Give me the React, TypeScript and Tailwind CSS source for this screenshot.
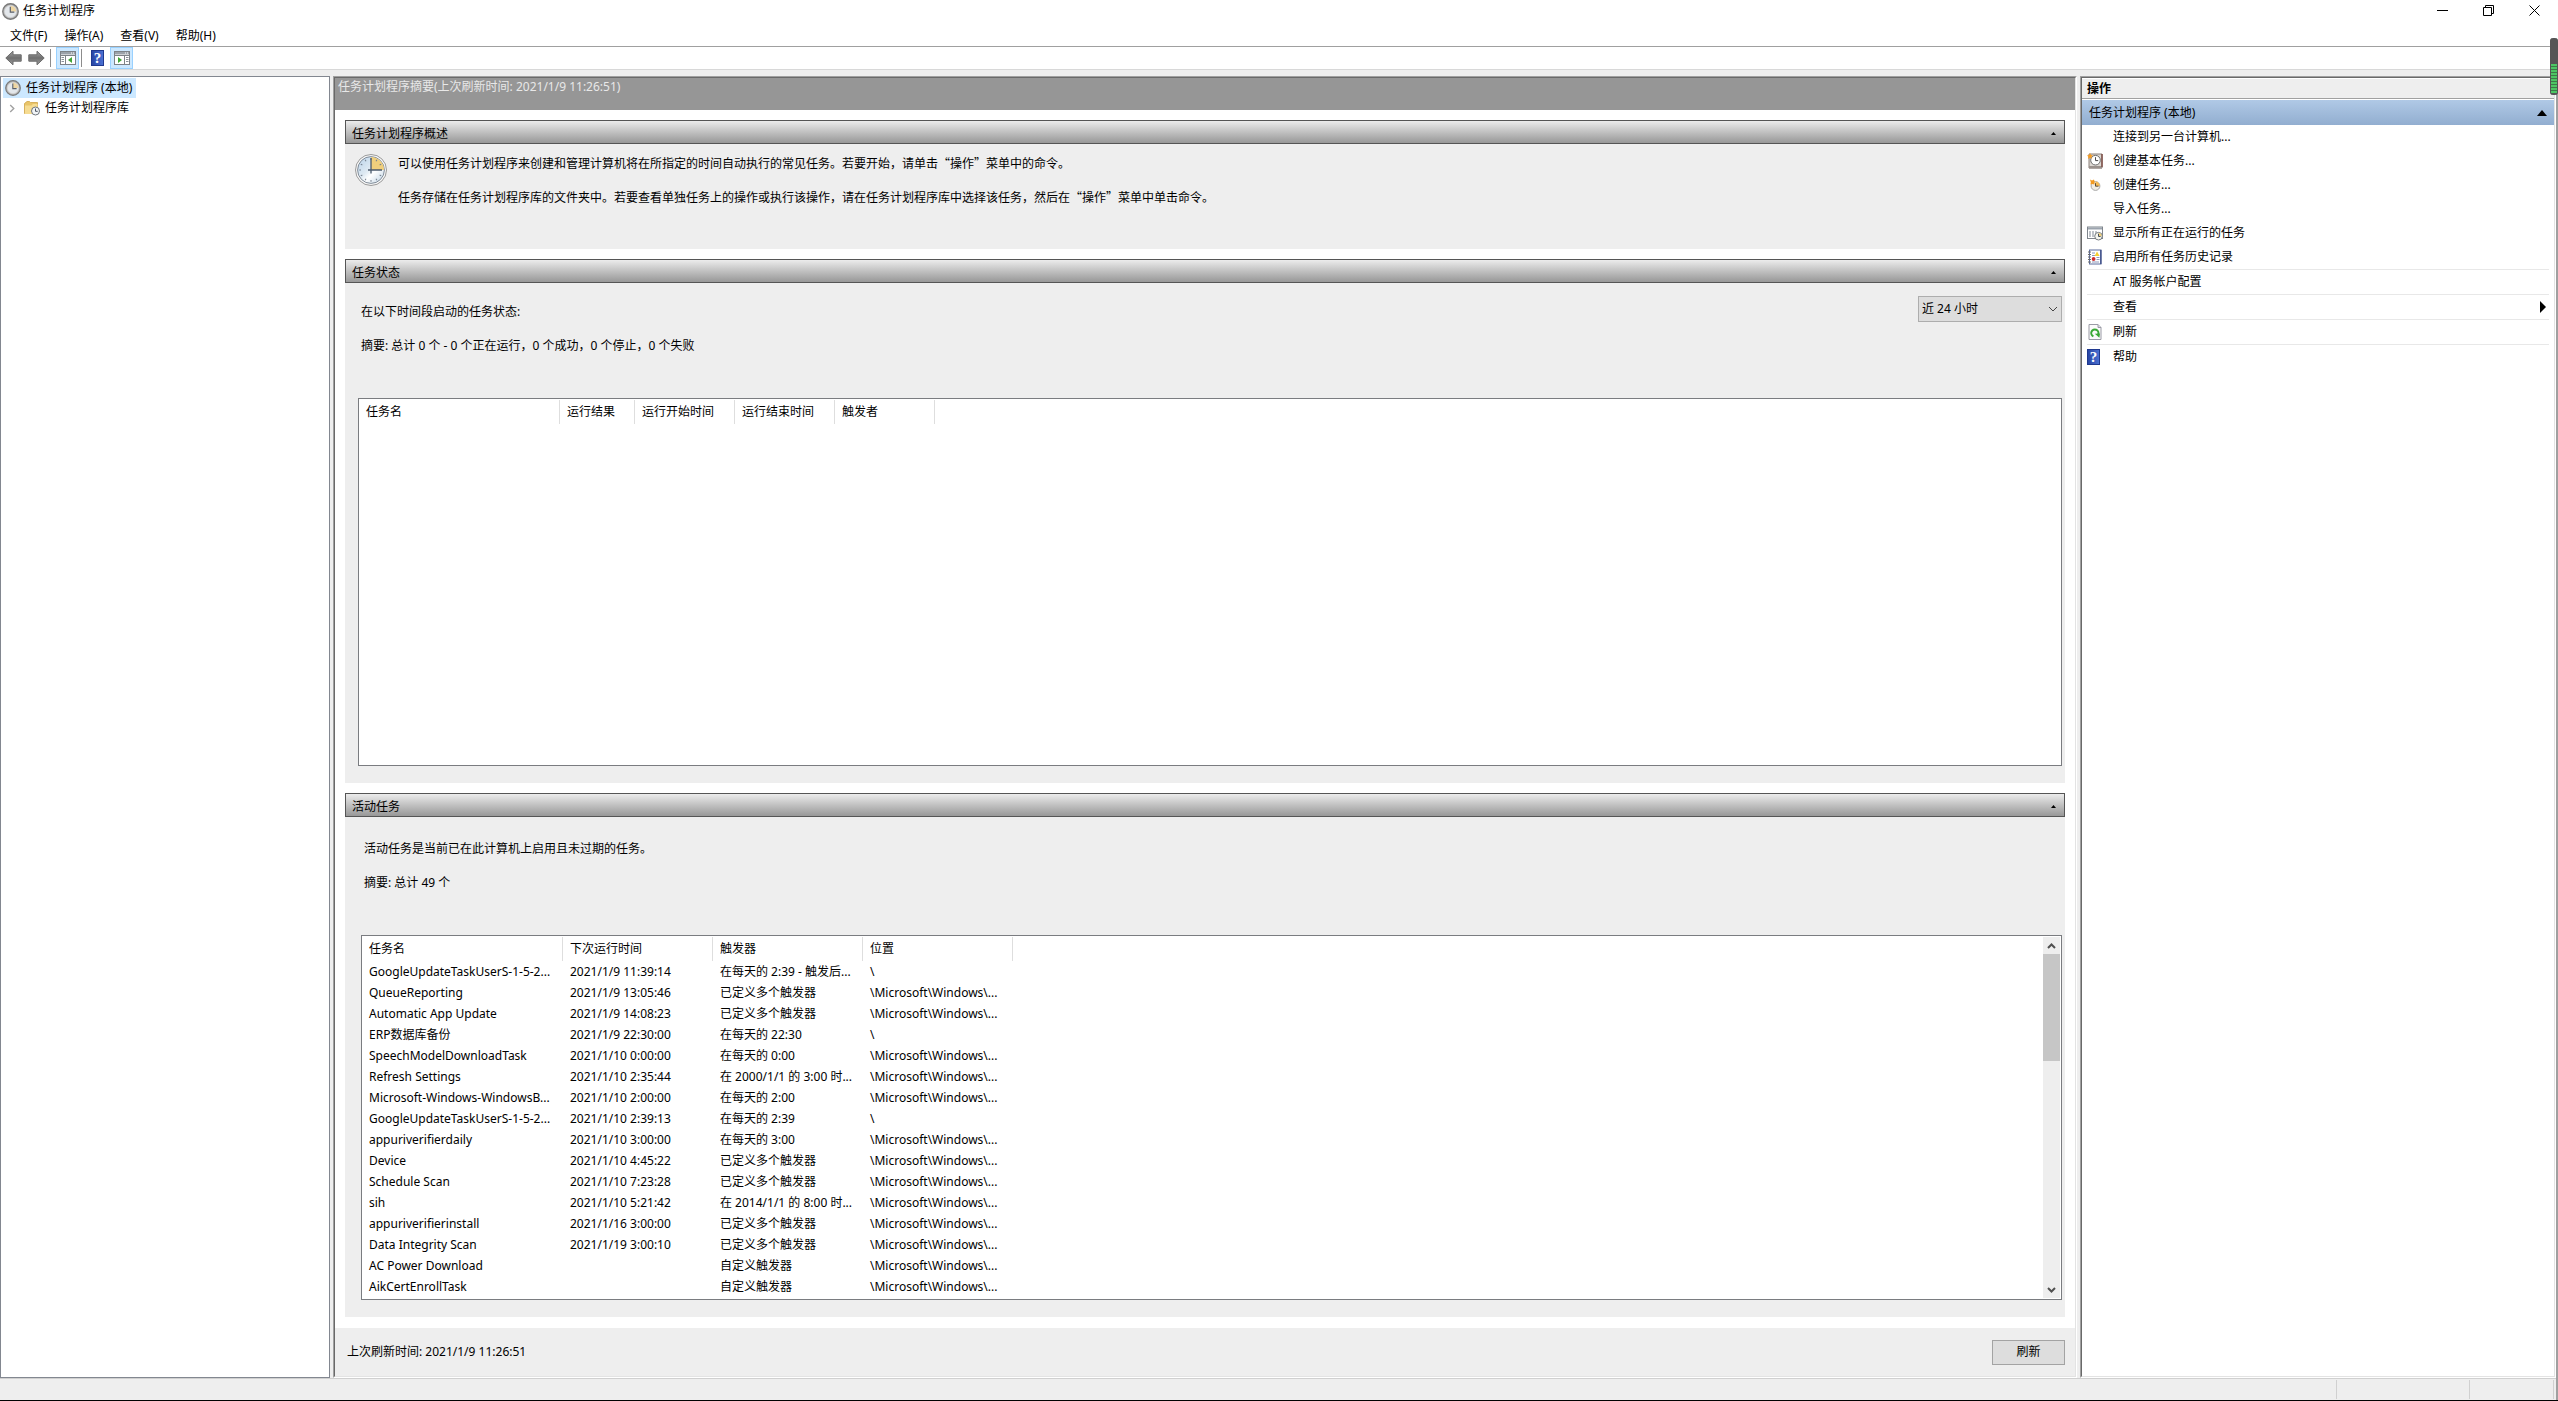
import { useState } from 'react'
import type { ReactNode } from 'react'

type Task = { name: string; next: string; trigger: string; location: string }

const MS = '\\Microsoft\\Windows\\...'

const tasks: Task[] = [
  { name: 'GoogleUpdateTaskUserS-1-5-2...', next: '2021/1/9 11:39:14', trigger: '在每天的 2:39 - 触发后...', location: '\\' },
  { name: 'QueueReporting', next: '2021/1/9 13:05:46', trigger: '已定义多个触发器', location: MS },
  { name: 'Automatic App Update', next: '2021/1/9 14:08:23', trigger: '已定义多个触发器', location: MS },
  { name: 'ERP数据库备份', next: '2021/1/9 22:30:00', trigger: '在每天的 22:30', location: '\\' },
  { name: 'SpeechModelDownloadTask', next: '2021/1/10 0:00:00', trigger: '在每天的 0:00', location: MS },
  { name: 'Refresh Settings', next: '2021/1/10 2:35:44', trigger: '在 2000/1/1 的 3:00 时...', location: MS },
  { name: 'Microsoft-Windows-WindowsB...', next: '2021/1/10 2:00:00', trigger: '在每天的 2:00', location: MS },
  { name: 'GoogleUpdateTaskUserS-1-5-2...', next: '2021/1/10 2:39:13', trigger: '在每天的 2:39', location: '\\' },
  { name: 'appuriverifierdaily', next: '2021/1/10 3:00:00', trigger: '在每天的 3:00', location: MS },
  { name: 'Device', next: '2021/1/10 4:45:22', trigger: '已定义多个触发器', location: MS },
  { name: 'Schedule Scan', next: '2021/1/10 7:23:28', trigger: '已定义多个触发器', location: MS },
  { name: 'sih', next: '2021/1/10 5:21:42', trigger: '在 2014/1/1 的 8:00 时...', location: MS },
  { name: 'appuriverifierinstall', next: '2021/1/16 3:00:00', trigger: '已定义多个触发器', location: MS },
  { name: 'Data Integrity Scan', next: '2021/1/19 3:00:10', trigger: '已定义多个触发器', location: MS },
  { name: 'AC Power Download', next: '', trigger: '自定义触发器', location: MS },
  { name: 'AikCertEnrollTask', next: '', trigger: '自定义触发器', location: MS },
]

function ClockIcon({ className }: { className: string }) {
  return (
    <svg viewBox="0 0 16 16" className={className} aria-hidden="true">
      <circle cx="8" cy="8" r="7.3" fill="#b4b4b4" stroke="#7a7a7a" strokeWidth="1.2" />
      <circle cx="8" cy="8" r="5.6" fill="#e3e7eb" stroke="#d6d6d6" strokeWidth="0.6" />
      <path d="M8 8V2.6A5.4 5.4 0 0 1 13.4 8Z" fill="#eed6a3" />
      <path d="M7.8 3.6V8.6H11.6" fill="none" stroke="#5a5f68" strokeWidth="1.1" />
    </svg>
  )
}

function BigClock() {
  const ticks = [30, 60, 120, 150, 180, 210, 240, 270, 300, 330, 0]
  return (
    <svg viewBox="0 0 32 32" className="mt-px size-8 shrink-0" aria-hidden="true">
      <defs>
        <linearGradient id="face" x1="0" y1="0" x2="1" y2="1">
          <stop offset="0" stopColor="#b9d3ea" />
          <stop offset="0.45" stopColor="#dfeaf3" />
          <stop offset="0.6" stopColor="#ffffff" />
          <stop offset="1" stopColor="#b9cfe2" />
        </linearGradient>
      </defs>
      <circle cx="16" cy="16" r="15.5" fill="#f7f7f7" stroke="#8f8f8f" strokeWidth="0.9" />
      <circle cx="16" cy="16" r="13.4" fill="url(#face)" stroke="#77828e" strokeWidth="0.9" />
      <path d="M16 16V3A13 13 0 0 1 29 16Z" fill="#f0cf7c" />
      {ticks.map((t) => (
        <path key={t} d="M16 4.2V6" stroke="#76818f" strokeWidth="1" transform={`rotate(${t} 16 16)`} />
      ))}
      <path d="M16 4V19.5M13 16H27" stroke="#4b5a6c" strokeWidth="1.3" />
    </svg>
  )
}

function FolderClock() {
  return (
    <svg viewBox="0 0 16 16" className="size-4" aria-hidden="true">
      <path d="M0.5 3.5L3 1.5H5.5L6.5 2.5H13.5V13.5H0.5Z" fill="#e9c468" stroke="#cfa548" strokeWidth="0.8" />
      <path d="M1 5.5H7.5L9 4H13.5V14H1Z" fill="#f6dc92" />
      <circle cx="11.5" cy="11" r="4" fill="#f2f5f8" stroke="#6f757c" strokeWidth="1" />
      <path d="M11.5 8.5V11.3H13.7" fill="none" stroke="#4a5360" strokeWidth="1" />
    </svg>
  )
}

function NavArrow({ flip = false }: { flip?: boolean }) {
  return (
    <svg viewBox="0 0 17 16" className={flip ? 'h-4 w-[17px] -scale-x-100' : 'h-4 w-[17px]'} aria-hidden="true">
      <defs>
        <linearGradient id="nav" x1="0" y1="0" x2="0" y2="1">
          <stop offset="0" stopColor="#a5a5a5" />
          <stop offset="0.5" stopColor="#6f6f6f" />
          <stop offset="1" stopColor="#a0a0a0" />
        </linearGradient>
      </defs>
      <path d="M0.8 8L8 1.2V4.8H16.2V11.2H8V14.8Z" fill="url(#nav)" stroke="#6b6b6b" strokeWidth="1" strokeLinejoin="round" />
    </svg>
  )
}

function PaneIcon({ right = false }: { right?: boolean }) {
  return (
    <svg viewBox="0 0 16 14" className="h-[14px] w-4" aria-hidden="true">
      <rect x="0.5" y="0.5" width="15" height="13" fill="#fff" stroke="#7d8288" />
      <rect x="1" y="1" width="14" height="2.5" fill="#9ba2aa" />
      <path d="M11 2H12M13 2H14" stroke="#fff" />
      <path d="M1 4.5H15" stroke="#7d8288" />
      {right ? (
        <>
          <path d="M10.5 5V13" stroke="#7d8288" />
          <path d="M12 6.5H14.5M12 8.5H14.5M12 10.5H14.5" stroke="#8a9098" />
          <path d="M4 6V12L8 9Z" fill="#3fa535" />
        </>
      ) : (
        <>
          <path d="M5.5 5V13" stroke="#7d8288" />
          <path d="M1.5 6.5H4M1.5 8.5H4M1.5 10.5H4" stroke="#8a9098" />
          <path d="M12 6V12L8 9Z" fill="#3fa535" />
        </>
      )}
    </svg>
  )
}

function HelpIcon() {
  return (
    <span className="flex h-4 w-[13px] items-center justify-center border border-[#20398f] bg-linear-to-r from-[#2946a5] to-[#4a70d2] font-['Liberation_Serif',serif] text-[15px] leading-4 font-bold text-white">
      ?
    </span>
  )
}

function BasicTaskIcon() {
  return (
    <svg viewBox="0 0 16 16" className="size-4" aria-hidden="true">
      <path d="M2 1H15V15H2Z" fill="#dcd7d2" stroke="#8c817b" />
      <path d="M2 13H15V15.5H2Z" fill="#9a918c" />
      <path d="M15 1V14" stroke="#7d4a43" strokeWidth="1.4" />
      <circle cx="8.5" cy="7.2" r="4.8" fill="#fff" stroke="#6d6d6d" />
      <path d="M8.5 4.2V7.6H11.2" fill="none" stroke="#4b4b4b" />
      <path d="M3 0L4 2L6 2.4L4.4 3.8L4.8 6L3 4.8L1 6L1.4 3.8L0 2.4L2.2 2Z" fill="#f49b22" />
    </svg>
  )
}

function NewTaskIcon() {
  return (
    <svg viewBox="0 0 16 16" className="size-4" aria-hidden="true">
      <circle cx="8.5" cy="9" r="4.4" fill="#f1ede4" stroke="#a7a7a7" />
      <path d="M8.5 9V4.6A4.4 4.4 0 0 1 12.9 9Z" fill="#f5bb55" />
      <path d="M3 2.5L5 3.4L7 2.5L7.6 4.5L7.4 7.4L5.4 7L3.4 7.6L3.8 5.2Z" fill="#f39a1f" />
      <path d="M8.5 6.2V9.2H11.5" fill="none" stroke="#5b4a35" />
    </svg>
  )
}

function RunningIcon() {
  return (
    <svg viewBox="0 0 16 16" className="size-4" aria-hidden="true">
      <rect x="0.5" y="2" width="15" height="11.5" fill="#fff" stroke="#7f858c" />
      <path d="M1 3.5H15" stroke="#9ca4ae" strokeWidth="2" />
      <path d="M2 7H4M5 7H7M8 7H10M2 9H4M5 9H7M2 11H4M5 11H7" stroke="#7e8894" />
      <circle cx="11.5" cy="11.2" r="3.8" fill="#f5f5ef" stroke="#747a80" />
      <path d="M11.5 11.2V8A3.2 3.2 0 0 1 14.7 11.2Z" fill="#efd07a" />
      <path d="M11.5 8.8V11.5H13.6" fill="none" stroke="#49525c" />
    </svg>
  )
}

function HistoryIcon() {
  return (
    <svg viewBox="0 0 16 16" className="size-4" aria-hidden="true">
      <rect x="2.5" y="1" width="11.5" height="14" fill="#fff" stroke="#5d6c9c" />
      <path d="M13.8 1V15" stroke="#40508a" strokeWidth="1.4" />
      <path d="M1 3H4M1 5.5H4M1 8H4M1 10.5H4M1 13H4" stroke="#6a6a6a" />
      <path d="M5 4H8M5 6.5H8M9.5 8.5H12.5M9.5 10.5H12.5M5 13H12" stroke="#8d97b8" />
      <path d="M10 2.5L12.6 7H7.6Z" fill="#f6cf2f" />
      <circle cx="6.6" cy="10" r="1.9" fill="#cf2a2a" />
    </svg>
  )
}

function RefreshIcon() {
  return (
    <svg viewBox="0 0 16 16" className="size-4" aria-hidden="true">
      <path d="M2 0.5H11L14 3.5V15.5H2Z" fill="#fbfbfb" stroke="#9a9aa5" />
      <path d="M11 0.5V3.5H14" fill="#dadae4" stroke="#9a9aa5" />
      <path d="M6.4 12.4A3.6 3.6 0 1 1 11.2 10.4" fill="none" stroke="#39a935" strokeWidth="2" />
      <path d="M7.8 9.8L13 9.4L12.4 13.8Z" fill="#39a935" />
    </svg>
  )
}

function Section({ title, children }: { title: string; children: ReactNode }) {
  const [open, setOpen] = useState(true)
  return (
    <section>
      <h2>
        <button
          type="button"
          aria-expanded={open}
          onClick={() => setOpen(!open)}
          className="flex h-6 w-full items-end justify-between border border-[#555] bg-linear-to-b from-[#ececec] to-[#989898] pr-2 pl-[6px] leading-[18px]"
        >
          {title}
          <svg viewBox="0 0 5 3" className="mb-2 h-[3px] w-[5px]" aria-hidden="true">
            <path d="M0 3L2.5 0L5 3Z" />
          </svg>
        </button>
      </h2>
      {open && <div className="bg-[#eee]">{children}</div>}
    </section>
  )
}

function Th({ children }: { children?: ReactNode }) {
  return <th className="border-r border-[#dedede] pl-[7px] text-left font-normal">{children}</th>
}

function Action({ icon, children, after }: { icon?: ReactNode; children: ReactNode; after?: ReactNode }) {
  return (
    <button type="button" className="flex h-6 w-full items-center hover:bg-[#e5f3ff]">
      <span className="flex w-[26px] items-center">{icon}</span>
      {children}
      {after}
    </button>
  )
}

export default function App() {
  return (
    <div
      lang="zh-CN"
      className="flex min-h-screen flex-col border-b border-black bg-white font-['Noto_Sans','Noto_Sans_CJK_SC',sans-serif] text-xs leading-5 text-black"
    >
      <header className="flex h-6 items-start justify-between">
        <h1 className="flex items-center gap-1 pt-px pl-[2px]">
          <ClockIcon className="size-[17px]" />
          任务计划程序
        </h1>
        <div className="flex pr-px">
          <button type="button" aria-label="最小化" className="flex h-5 w-[46px] items-center justify-center">
            <svg viewBox="0 0 11 11" className="size-[11px]"><path d="M0 5.5H11" stroke="#000" /></svg>
          </button>
          <button type="button" aria-label="还原" className="flex h-5 w-[46px] items-center justify-center">
            <svg viewBox="0 0 11 11" className="size-[11px]"><path d="M0.5 2.5H8.5V10.5H0.5ZM2.5 2.5V0.5H10.5V8.5H8.5" fill="none" stroke="#000" /></svg>
          </button>
          <button type="button" aria-label="关闭" className="flex h-5 w-[46px] items-center justify-center">
            <svg viewBox="0 0 11 11" className="size-[11px]"><path d="M0.5 0.5L10.5 10.5M10.5 0.5L0.5 10.5" stroke="#000" /></svg>
          </button>
        </div>
      </header>

      <nav className="flex h-[23px] items-end gap-[17px] border-b border-[#a0a0a0] pl-[10px]">
        <button type="button">文件(F)</button>
        <button type="button">操作(A)</button>
        <button type="button">查看(V)</button>
        <button type="button">帮助(H)</button>
      </nav>

      <div className="flex h-[23px] items-center border-b border-[#d8d8d8] pl-[5px]">
        <button type="button" aria-label="后退" className="mr-[6px]"><NavArrow /></button>
        <button type="button" aria-label="前进"><NavArrow flip /></button>
        <span className="mx-[5px] h-[18px] w-px bg-[#8c8c8c]" />
        <button type="button" aria-label="显示控制台树" className="flex h-[22px] w-[23px] items-center justify-center border border-[#99d1ff] bg-[#cce8ff]">
          <PaneIcon />
        </button>
        <span className="mr-[9px] ml-[2px] h-[18px] w-px bg-[#8c8c8c]" />
        <button type="button" aria-label="帮助" className="mr-[6px]"><HelpIcon /></button>
        <button type="button" aria-label="显示操作窗格" className="flex h-[22px] w-[23px] items-center justify-center border border-[#99d1ff] bg-[#cce8ff]">
          <PaneIcon right />
        </button>
      </div>

      <div className="relative flex grow flex-col border-r-2 border-[#a0a0a0] bg-[#eee]">
        {/* volume meter hanging over the window edge */}
        <div className="absolute -top-8 -right-[2px] h-[57px] w-2 overflow-hidden rounded-[3px] border-x border-[#555] bg-[#555] pt-[26px]">
          <div className="h-[29px] bg-[repeating-linear-gradient(#4cc764_0_2px,#3c7a48_2px_3px)]" />
        </div>

        <div className="flex grow gap-[3px] pt-[6px]">
          <aside className="w-[330px] shrink-0 border border-[#828790] bg-white pt-px pl-[2px]">
            <button type="button" className="flex h-5 items-center gap-[5px] bg-[#cce8ff] pr-1 pl-[2px]">
              <ClockIcon className="size-4" />
              任务计划程序 (本地)
            </button>
            <button type="button" className="flex h-5 items-center pl-[6px]">
              <svg viewBox="0 0 6 10" className="mr-[9px] h-[9px] w-[6px]"><path d="M1 1L5 5L1 9" fill="none" stroke="#a0a0a0" strokeWidth="1.5" /></svg>
              <FolderClock />
              <span className="pl-[5px]">任务计划程序库</span>
            </button>
          </aside>

          <main className="flex min-w-0 grow flex-col border border-t-[#a0a0a0] border-r-white border-b-white border-l-[#a0a0a0]">
            <div className="flex grow flex-col border border-t-[#696969] border-r-[#e3e3e3] border-b-[#e3e3e3] border-l-[#696969] bg-white">
              <div className="h-8 bg-[#969696] pl-[3px] leading-[18px] text-[#e8e8e8]">任务计划程序摘要(上次刷新时间: 2021/1/9 11:26:51)</div>

              <div className="flex grow flex-col gap-[10px] p-[10px]">
                <Section title="任务计划程序概述">
                  <div className="flex h-[105px] gap-[11px] pt-[9px] pl-[10px] font-['Noto_Sans_CJK_SC',sans-serif]">
                    <BigClock />
                    <div>
                      <p className="mb-[14px]">可以使用任务计划程序来创建和管理计算机将在所指定的时间自动执行的常见任务。若要开始，请单击“操作”菜单中的命令。</p>
                      <p>任务存储在任务计划程序库的文件夹中。若要查看单独任务上的操作或执行该操作，请在任务计划程序库中选择该任务，然后在“操作”菜单中单击命令。</p>
                    </div>
                  </div>
                </Section>

                <Section title="任务状态">
                  <div className="pt-[13px] pr-[3px] pb-[17px] pl-[13px]">
                    <div className="flex items-end justify-between pl-[3px]">
                      <label htmlFor="period">在以下时间段启动的任务状态:</label>
                      <div className="relative">
                        <select id="period" className="h-[26px] w-36 appearance-none border border-[#adadad] bg-[#ddd] pl-[3px]">
                          <option>近 24 小时</option>
                          <option>近 7 天</option>
                          <option>近 30 天</option>
                        </select>
                        <svg viewBox="0 0 10 6" className="pointer-events-none absolute top-[10px] right-1 h-[6px] w-[10px]"><path d="M1 1L5 5L9 1" fill="none" stroke="#444" /></svg>
                      </div>
                    </div>
                    <p className="mt-[14px] mb-[42px] pl-[3px]">摘要: 总计 0 个 - 0 个正在运行，0 个成功，0 个停止，0 个失败</p>
                    <div className="h-[368px] border border-[#7a7c80] bg-white pt-px">
                      <table className="w-[576px] table-fixed border-separate border-spacing-0">
                        <colgroup>
                          <col className="w-[201px]" />
                          <col className="w-[75px]" />
                          <col className="w-[100px]" />
                          <col className="w-[100px]" />
                          <col className="w-[100px]" />
                        </colgroup>
                        <thead>
                          <tr className="h-6">
                            <Th>任务名</Th>
                            <Th>运行结果</Th>
                            <Th>运行开始时间</Th>
                            <Th>运行结束时间</Th>
                            <Th>触发者</Th>
                          </tr>
                        </thead>
                      </table>
                    </div>
                  </div>
                </Section>

                <Section title="活动任务">
                  <div className="pt-[22px] pr-[3px] pb-[17px] pl-4">
                    <p className="mb-[14px] pl-[3px]">活动任务是当前已在此计算机上启用且未过期的任务。</p>
                    <p className="mb-[42px] pl-[3px]">摘要: 总计 49 个</p>
                    <div className="flex h-[365px] justify-between border border-[#7a7c80] bg-white py-px pr-px">
                      <table className="h-fit w-[651px] table-fixed border-separate border-spacing-0">
                        <colgroup>
                          <col className="w-[201px]" />
                          <col className="w-[150px]" />
                          <col className="w-[150px]" />
                          <col className="w-[150px]" />
                        </colgroup>
                        <thead>
                          <tr className="h-6">
                            <Th>任务名</Th>
                            <Th>下次运行时间</Th>
                            <Th>触发器</Th>
                            <Th>位置</Th>
                          </tr>
                        </thead>
                        <tbody>
                          {tasks.map((t, i) => (
                            <tr key={i} className="h-[21px] whitespace-nowrap">
                              <td className="pl-[7px]">{t.name}</td>
                              <td className="pl-[7px]">{t.next}</td>
                              <td className="pl-[7px]">{t.trigger}</td>
                              <td className="pl-[7px]">{t.location}</td>
                            </tr>
                          ))}
                        </tbody>
                      </table>
                      <div className="flex w-[17px] flex-col bg-[#eee]">
                        <button type="button" aria-label="向上滚动" className="flex h-[17px] items-center justify-center">
                          <svg viewBox="0 0 9 6" className="h-[6px] w-[9px]"><path d="M1 5L4.5 1.5L8 5" fill="none" stroke="#505050" strokeWidth="2" /></svg>
                        </button>
                        <div className="h-[107px] bg-[#c6c6c6]" />
                        <button type="button" aria-label="向下滚动" className="mt-auto flex h-[17px] items-center justify-center">
                          <svg viewBox="0 0 9 6" className="h-[6px] w-[9px]"><path d="M1 1L4.5 4.5L8 1" fill="none" stroke="#505050" strokeWidth="2" /></svg>
                        </button>
                      </div>
                    </div>
                  </div>
                </Section>
              </div>

              <footer className="flex h-12 items-center justify-between bg-[#eee] pr-[10px] pl-3">
                上次刷新时间: 2021/1/9 11:26:51
                <button type="button" className="h-[25px] w-[73px] border border-[#a3a3a3] bg-[#ddd]">刷新</button>
              </footer>
            </div>
          </main>

          <aside className="flex w-[476px] shrink-0 flex-col border border-t-[#a0a0a0] border-r-white border-b-white border-l-[#a0a0a0]">
            <div className="grow border border-t-[#696969] border-r-[#e3e3e3] border-b-[#e3e3e3] border-l-[#696969] bg-white pt-px">
              <h2 className="mb-px h-5 border-b border-[#a0a0a0] bg-[#eee] pl-[5px] font-bold">操作</h2>
              <button type="button" className="flex h-[25px] w-full items-center justify-between bg-linear-to-b from-[#b0c9e6] to-[#92aed0] pr-[7px] pl-[7px]">
                任务计划程序 (本地)
                <svg viewBox="0 0 10 6" className="h-[6px] w-[10px]"><path d="M0 6L5 0L10 6Z" /></svg>
              </button>
              <div className="divide-y divide-[#e8e8e8] pr-[5px] pl-[5px]">
                <div>
                  <Action>连接到另一台计算机...</Action>
                  <Action icon={<BasicTaskIcon />}>创建基本任务...</Action>
                  <Action icon={<NewTaskIcon />}>创建任务...</Action>
                  <Action>导入任务...</Action>
                  <Action icon={<RunningIcon />}>显示所有正在运行的任务</Action>
                  <Action icon={<HistoryIcon />}>启用所有任务历史记录</Action>
                </div>
                <div><Action>AT 服务帐户配置</Action></div>
                <div>
                  <Action after={<svg viewBox="0 0 6 12" className="mr-[3px] ml-auto h-3 w-[6px]"><path d="M0 0L6 6L0 12Z" /></svg>}>查看</Action>
                </div>
                <div><Action icon={<RefreshIcon />}>刷新</Action></div>
                <div><Action icon={<HelpIcon />}>帮助</Action></div>
              </div>
            </div>
          </aside>
        </div>

        <div className="flex h-[22px] justify-end border-t border-[#d0d0d0] py-px pr-[2px]">
          <div className="w-[133px] border-l border-[#d0d0d0]" />
          <div className="w-[85px] border-x border-[#d0d0d0]" />
        </div>
      </div>
    </div>
  )
}
